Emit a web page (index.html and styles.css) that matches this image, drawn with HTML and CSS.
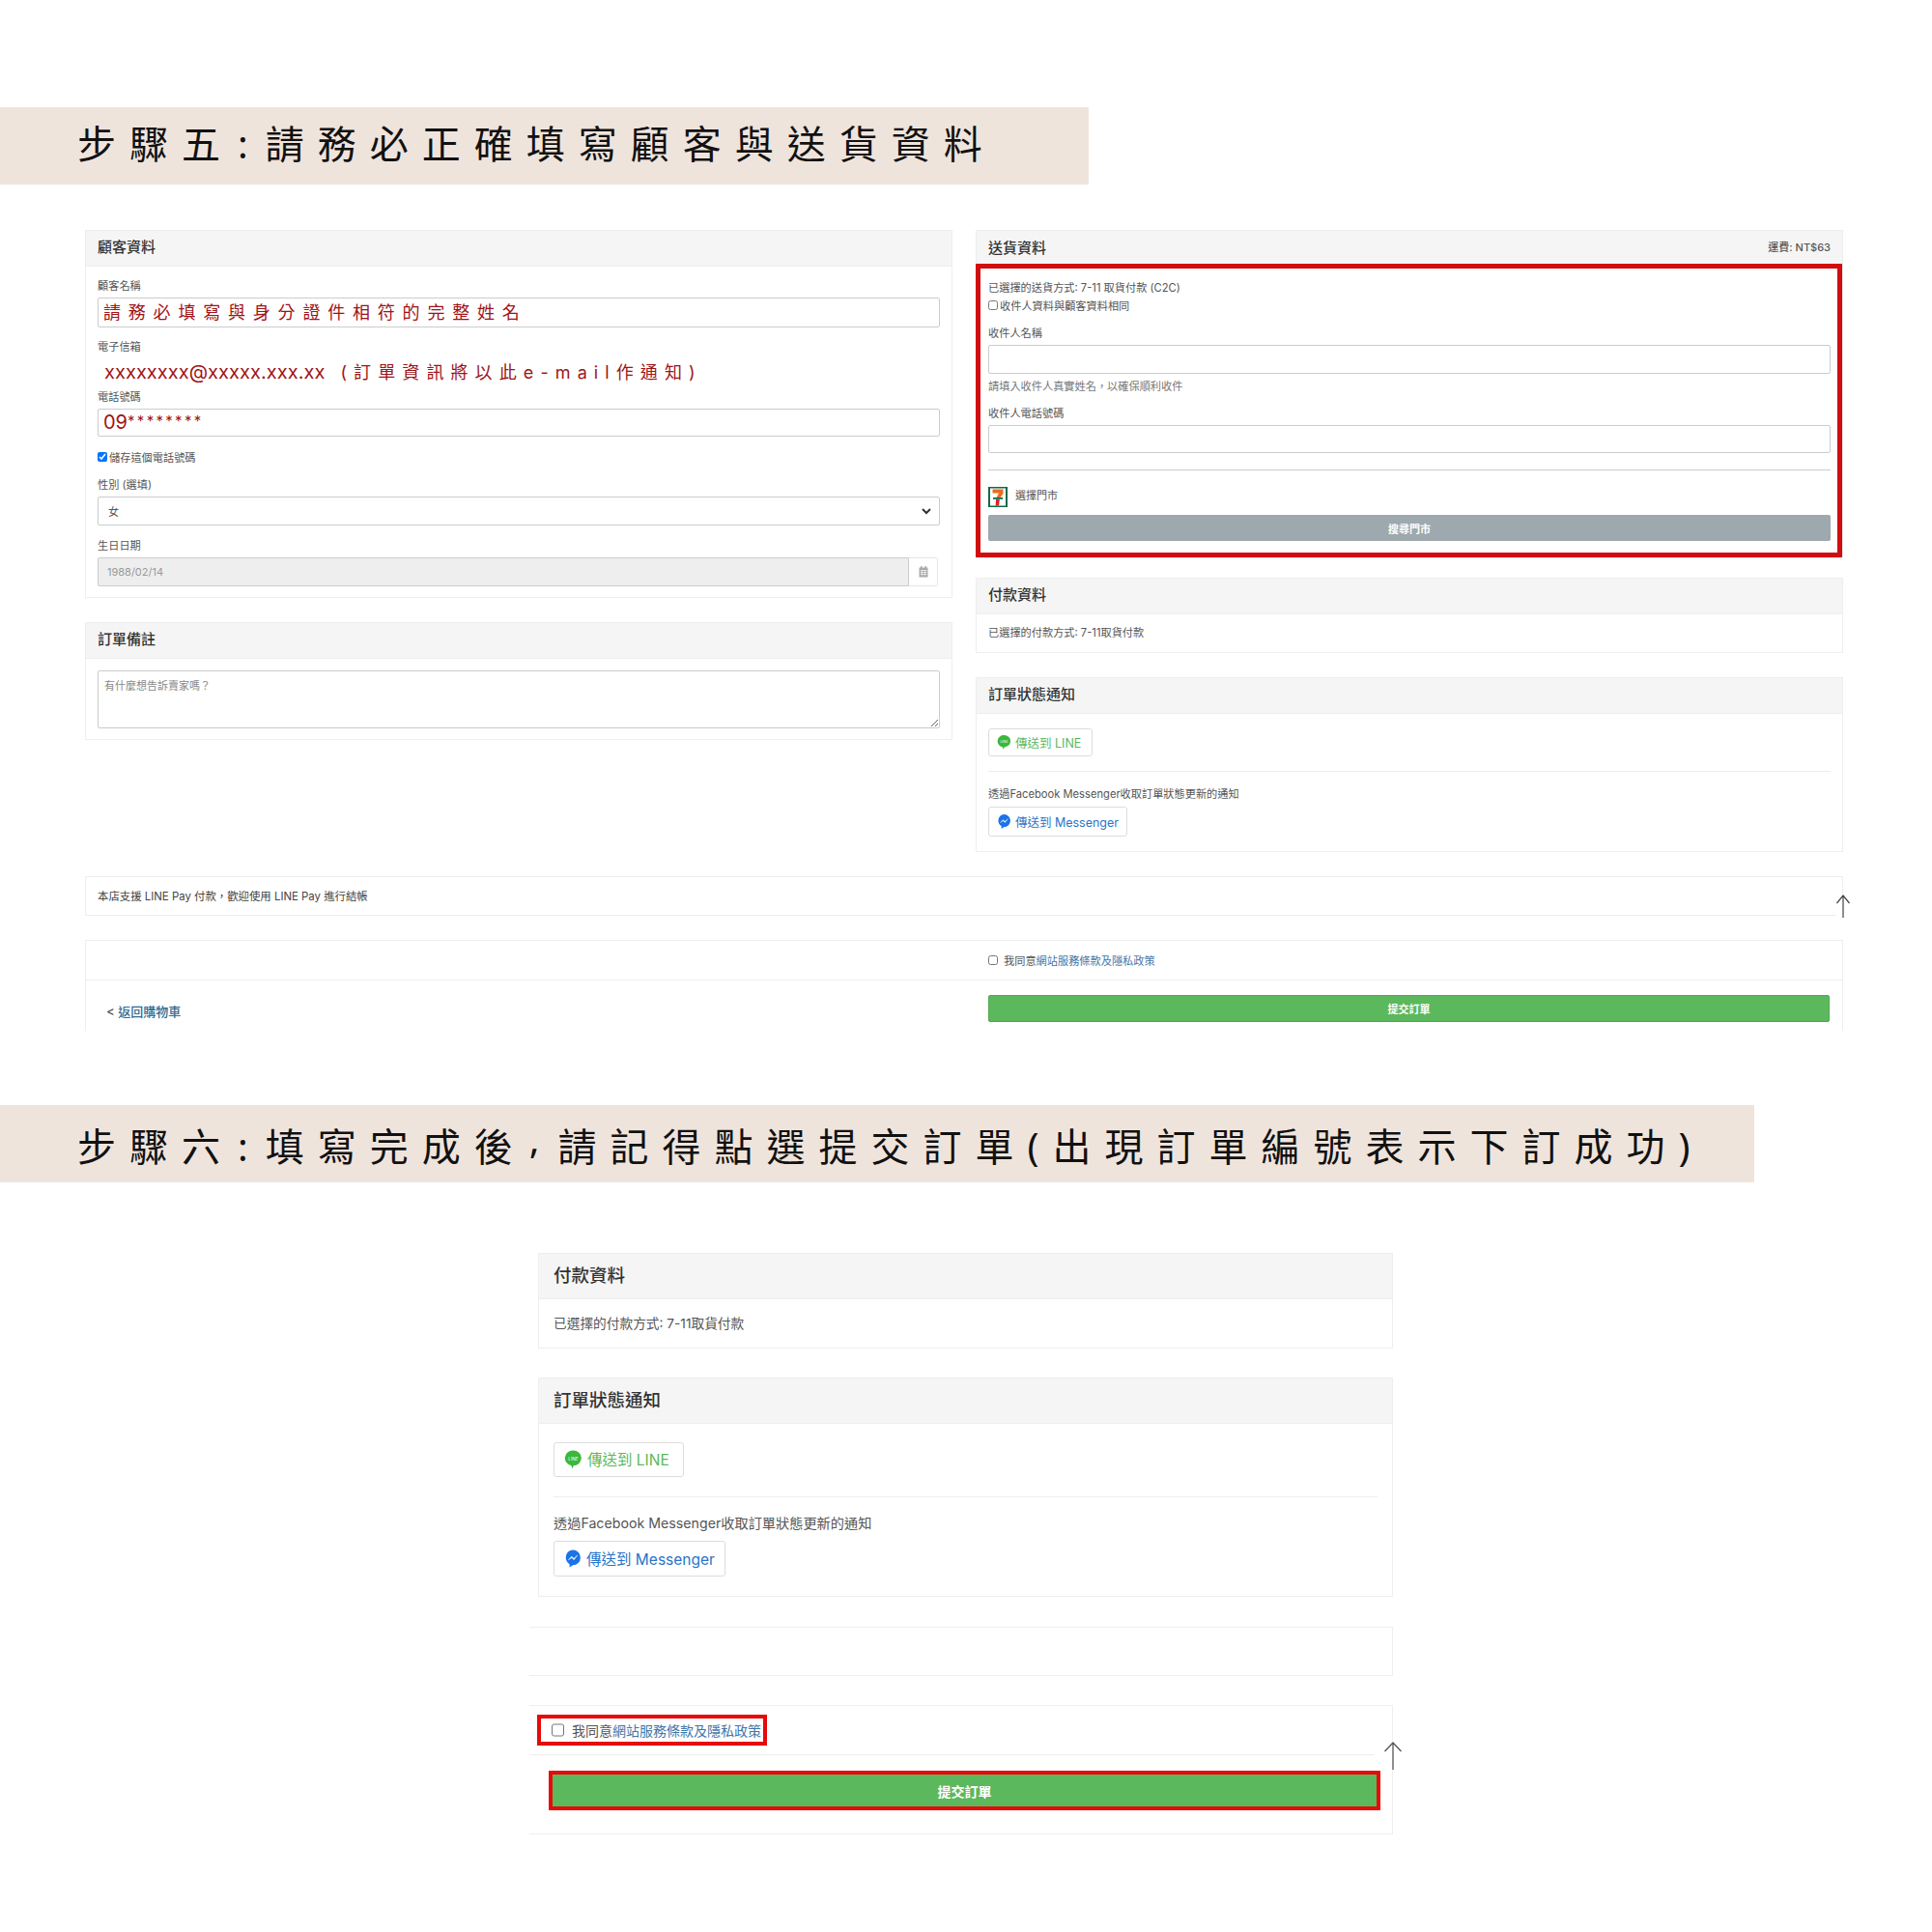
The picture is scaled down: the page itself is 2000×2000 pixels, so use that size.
FILE: index.html
```html
<!DOCTYPE html>
<html lang="zh-Hant">
<head>
<meta charset="utf-8">
<title>步驟五與步驟六</title>
<link rel="stylesheet" href="styles.css">
</head>
<body>
<h1 class="banner banner-five">步驟五<span class="colon">:</span>請務必正確填寫顧客與送貨資料</h1>

<main class="checkout">
  <div class="cols">
    <div class="col">
      <section class="panel">
        <h2 class="panel-head">顧客資料</h2>
        <div class="panel-body customer-body">
          <div class="label">顧客名稱</div>
          <div class="input h31 red-name">請務必填寫與身分證件相符的完整姓名</div>
          <div class="label gap12">電子信箱</div>
          <div class="email-line"><span class="email">xxxxxxxx@xxxxx.xxx.xx</span><span class="email-note">(訂單資訊將以此e-mail作通知)</span></div>
          <div class="label">電話號碼</div>
          <div class="input h29 red-phone">09<span class="stars">********</span></div>
          <label class="check-row gap13"><input class="tick" type="checkbox" checked>儲存這個電話號碼</label>
          <div class="label gap13">性別 (選填)</div>
          <div class="input h30 select-box"><span>女</span>
            <svg class="chev" viewBox="0 0 10 7" width="10" height="7"><path d="M1 1l4 4 4-4" fill="none" stroke="#333" stroke-width="2"/></svg>
          </div>
          <div class="label gap13">生日日期</div>
          <div class="date-row">
            <div class="date-input">1988/02/14</div>
            <div class="date-addon">
              <svg viewBox="0 0 10 12" width="10" height="12"><path d="M2 0h1.500v2H2zM6.500 0H8v2H6.500z" fill="#aaa"/><path d="M.5 1.500h9V11.500h-9z" fill="#aaa"/><path d="M1.500 4.500h7M1.500 6.500h7M1.500 8.500h7M3.500 4v6M6.500 4v6" stroke="#fff" stroke-width=".6"/></svg>
            </div>
          </div>
        </div>
      </section>

      <section class="panel gap25">
        <h2 class="panel-head">訂單備註</h2>
        <div class="panel-body notes-body">
          <textarea class="notes" placeholder="有什麼想告訴賣家嗎？"></textarea>
        </div>
      </section>
    </div>

    <div class="col">
      <section class="panel">
        <div class="panel-head ship-head"><h2 class="ship-title">送貨資料</h2><span class="fee">運費: NT$63</span></div>
        <div class="red-box">
          <div class="line">已選擇的送貨方式: 7-11 取貨付款 (C2C)</div>
          <label class="check-row same-row"><input class="tick" type="checkbox">收件人資料與顧客資料相同</label>
          <div class="label gap13">收件人名稱</div>
          <div class="input h30"></div>
          <div class="line help">請填入收件人真實姓名，以確保順利收件</div>
          <div class="label gap12">收件人電話號碼</div>
          <div class="input h29"></div>
          <hr class="rule ship-rule">
          <div class="store-row">
            <svg class="seven" viewBox="0 0 20 21" width="20" height="21">
              <rect width="20" height="21" fill="#0d6b4a"/>
              <rect x="2" y="1.500" width="16" height="18" fill="#fff"/>
              <path d="M4.500 2.500h11v4.500l-3 4H8.500l2.500-4.500H4.500z" fill="#ee6a1f"/>
              <path d="M5 11h10v1.800H5z" fill="#0d6b4a"/>
              <path d="M8 13h3.800l-.8 6.500H7.600z" fill="#d8242b"/>
            </svg>
            <span>選擇門市</span>
          </div>
          <div class="btn grey-btn">搜尋門市</div>
        </div>
      </section>

      <section class="panel gap20">
        <h2 class="panel-head">付款資料</h2>
        <div class="panel-body pay-body">已選擇的付款方式: 7-11取貨付款</div>
      </section>

      <section class="panel gap25">
        <h2 class="panel-head">訂單狀態通知</h2>
        <div class="panel-body notify-body">
          <div class="send line-btn">
            <svg viewBox="0 0 16 18" width="15" height="17"><path d="M8 1a7 6.600 0 0 1 0 13.200L7.500 17 6 14A7 6.600 0 0 1 8 1z" fill="#3ab83a"/><text x="8" y="9.500" font-size="4" text-anchor="middle" fill="#fff" font-family="Inter">LINE</text></svg>
            <span>傳送到 LINE</span>
          </div>
          <hr class="rule notify-rule">
          <div class="line">透過Facebook Messenger收取訂單狀態更新的通知</div>
          <div class="send msg-btn">
            <svg viewBox="0 0 16 18" width="15" height="17"><path d="M8 1a7 7 0 0 1 0 14l-3 2v-3A7 7 0 0 1 8 1z" fill="#1a73e8"/><path d="M4 10l3-3 2 2 3-3-3 4-2-2z" fill="#fff" stroke="#fff" stroke-width=".5"/></svg>
            <span>傳送到 Messenger</span>
          </div>
        </div>
      </section>
    </div>
  </div>

  <section class="panel gap25 pay-note has-arrow">本店支援 LINE Pay 付款，歡迎使用 LINE Pay 進行結帳
    <svg class="arrow arrow-five" viewBox="0 0 16 24" width="16" height="24"><rect width="16" height="24" fill="#fff"/><path d="M8 24V1M1.500 9L8 1l6.500 8" fill="none" stroke="#444" stroke-width="1.200"/></svg>
  </section>

  <section class="panel gap25 terms">
    <div class="terms-row">
      <label class="agree"><input class="tick" type="checkbox">我同意<a class="link" href="#">網站服務條款及隱私政策</a></label>
    </div>
    <div class="submit-row">
      <a class="back" href="#"><span class="lt">&lt;</span> 返回購物車</a>
      <div class="btn green-btn">提交訂單</div>
    </div>
  </section>
</main>

<h1 class="banner banner-six">步驟六<span class="colon">:</span>填寫完成後<span class="comma">,</span>請記得點選提交訂單<span class="paren">(</span>出現訂單編號表示下訂成功<span class="paren">)</span></h1>

<main class="review">
  <section class="panel big">
    <h2 class="panel-head">付款資料</h2>
    <div class="panel-body pay-body">已選擇的付款方式: 7-11取貨付款</div>
  </section>

  <section class="panel big gap30">
    <h2 class="panel-head">訂單狀態通知</h2>
    <div class="panel-body notify-body">
      <div class="send line-btn">
        <svg viewBox="0 0 16 18" width="19" height="22"><path d="M8 1a7 6.600 0 0 1 0 13.200L7.500 17 6 14A7 6.600 0 0 1 8 1z" fill="#3ab83a"/><text x="8" y="9.500" font-size="4" text-anchor="middle" fill="#fff" font-family="Inter">LINE</text></svg>
        <span>傳送到 LINE</span>
      </div>
      <hr class="rule notify-rule">
      <div class="line">透過Facebook Messenger收取訂單狀態更新的通知</div>
      <div class="send msg-btn">
        <svg viewBox="0 0 16 18" width="18" height="21"><path d="M8 1a7 7 0 0 1 0 14l-3 2v-3A7 7 0 0 1 8 1z" fill="#1a73e8"/><path d="M4 10l3-3 2 2 3-3-3 4-2-2z" fill="#fff" stroke="#fff" stroke-width=".5"/></svg>
        <span>傳送到 Messenger</span>
      </div>
    </div>
  </section>

  <section class="panel open-left blank gap31"></section>

  <section class="panel open-left final gap30 has-arrow">
    <div class="final-top">
      <label class="agree mark"><input class="tick" type="checkbox">我同意<a class="link" href="#">網站服務條款及隱私政策</a></label>
    </div>
    <div class="final-bottom">
      <div class="btn green-btn big-green">提交訂單</div>
    </div>
    <svg class="arrow arrow-six" viewBox="0 0 20 30" width="20" height="30"><rect width="20" height="30" fill="#fff"/><path d="M10 30V2M1.500 11L10 2l8.500 9" fill="none" stroke="#555" stroke-width="1.300"/></svg>
  </section>
</main>
</body>
</html>
```

FILE: styles.css
```css
* { box-sizing: border-box; }
html, body { margin: 0; padding: 0; background: #fff; }
body {
  width: 2000px;
  height: 2000px;
  overflow: hidden;
  font-family: Inter, "Noto Sans CJK TC", sans-serif;
  color: #555;
  font-size: 11px;
  padding-top: 111px;
}

.banner {
  height: 80px;
  margin: 0;
  padding-left: 80px;
  background: #efe4dc;
  color: #111;
  font-family: "Noto Sans CJK TC", sans-serif;
  font-size: 40px;
  font-weight: 400;
  line-height: 73px;
  letter-spacing: 14px;
  white-space: nowrap;
}
.banner-five { width: 1127px; }
.banner-six { width: 1816px; margin-top: 77px; line-height: 83px; }
.colon, .comma, .paren { font-family: "Noto Sans", sans-serif; }
.colon { margin: 0 4px; }
.comma { position: relative; top: -8px; margin: 0 5px 0 3px; }

.checkout { width: 1820px; margin: 47px 0 0 88px; }
.cols { display: grid; grid-template-columns: 898px 898px; column-gap: 24px; }
.col { min-width: 0; }
.gap12 { margin-top: 12px; }
.gap13 { margin-top: 13px; }
.gap20 { margin-top: 20px; }
.gap25 { margin-top: 25px; }
.gap30 { margin-top: 30px; }
.gap31 { margin-top: 31px; }

.panel { border: 1px solid #eee; background: #fff; position: relative; }
.panel-head {
  height: 37px;
  margin: 0;
  padding-left: 12px;
  background: #f5f5f5;
  border-bottom: 1px solid #eee;
  color: #333;
  font-size: 15px;
  font-weight: 500;
  line-height: 33px;
}
.panel-body { padding: 0 12px; }

.label { height: 16px; line-height: 16px; margin-bottom: 4px; color: #555; font-size: 11.200px; }
.input {
  border: 1px solid #ccc;
  border-radius: 2px;
  background: #fff;
  padding: 0 6px;
  white-space: nowrap;
}
.h31 { height: 31px; }
.h30 { height: 30px; }
.h29 { height: 29px; }

.customer-body { padding-top: 12px; padding-bottom: 11px; }
.red-name {
  color: #a01418;
  font-size: 18px;
  letter-spacing: 7.800px;
  line-height: 29px;
  padding-left: 5px;
}
.email-line {
  height: 32px;
  padding-left: 7px;
  color: #a01418;
  white-space: nowrap;
  line-height: 28px;
}
.email { font-size: 20px; letter-spacing: .05px; }
.email-note { font-size: 18px; letter-spacing: 7.100px; margin-left: 16px; }
.red-phone { color: #a01418; font-size: 20px; line-height: 27px; padding-left: 5px; }
.stars { font-size: 15px; letter-spacing: 2.300px; position: relative; top: -3px; }

.check-row { display: flex; align-items: center; height: 16px; font-size: 11.200px; color: #555; }
.tick { width: 10px; height: 10px; margin: 0 2px 0 0; flex: none; }
.select-box {
  display: flex;
  align-items: center;
  justify-content: space-between;
  padding: 0 8px 0 10px;
  color: #555;
  font-size: 11px;
}
.date-row { display: flex; height: 30px; width: 870px; }
.date-input {
  width: 840px;
  border: 1px solid #ccc;
  border-radius: 2px 0 0 2px;
  background: #eee;
  color: #999;
  font-size: 11px;
  line-height: 28px;
  padding-left: 9px;
}
.date-addon {
  flex: 1;
  border: 1px solid #e6e6e6;
  border-left: 0;
  border-radius: 0 2px 2px 0;
  display: flex;
  align-items: center;
  justify-content: center;
}

.notes-body { padding-top: 12px; padding-bottom: 11px; }
.notes {
  display: block;
  width: 100%;
  height: 60px;
  border: 1px solid #ccc;
  border-radius: 2px;
  padding: 6px;
  font-family: inherit;
  font-size: 11px;
}
.notes::placeholder { color: #888; }

.ship-head { display: flex; justify-content: space-between; align-items: center; height: 34px; padding-right: 12px; border-bottom: 0; }
.ship-title { margin: 0; font-size: 15px; font-weight: 500; }
.fee { font-size: 11px; color: #555; }
.red-box {
  margin: 0 0 0 -1px;
  width: 897px;
  height: 304px;
  border: 5px solid #d10d10;
  padding: 12px 7px 0 8px;
}
.line { height: 16px; line-height: 16px; font-size: 11.200px; white-space: nowrap; }
.same-row { margin-top: 2px; }
.help { margin-top: 5px; color: #777; }
.rule { margin: 0; border: 0; border-top: 1px solid #ddd; }
.ship-rule { margin-top: 17px; border-color: #ccc; }
.store-row { display: flex; align-items: flex-start; gap: 8px; height: 21px; margin-top: 17px; font-size: 11px; line-height: 18px; }
.seven { flex: none; }
.btn {
  display: flex;
  align-items: center;
  justify-content: center;
  color: #fff;
  font-weight: 700;
  font-size: 11px;
  border-radius: 2px;
}
.grey-btn { height: 27px; margin-top: 8px; background: #9da9ae; }

.pay-body { height: 39px; line-height: 39px; color: #555; font-size: 11.200px; }
.notify-body { padding-top: 15px; padding-bottom: 15px; }
.send {
  display: inline-flex;
  align-items: center;
  gap: 4px;
  padding: 0 8px;
  border: 1px solid #ddd;
  border-radius: 3px;
  font-size: 12.500px;
  vertical-align: top;
  white-space: nowrap;
}
.send span { padding-bottom: 1px; }
.line-btn { height: 29px; width: 108px; color: #5cb85c; }
.msg-btn { height: 31px; width: 144px; margin-top: 5px; color: #2a74c9; }
.notify-rule { margin: 15px 0 15px; border-color: #eee; }

.pay-note { height: 41px; padding-left: 12px; line-height: 41px; font-size: 11.400px; color: #444; }
.arrow { position: absolute; display: block; }
.arrow-five { right: -9px; bottom: -3px; }

.terms { height: 94px; border-bottom: 0; }
.terms-row { height: 41px; padding-left: 934px; border-bottom: 1px solid #eee; display: flex; align-items: center; }
.agree { display: flex; align-items: center; font-size: 11.200px; color: #555; white-space: nowrap; }
.agree .tick { margin-right: 6px; }
.link { color: #3f75a8; text-decoration: none; }
.submit-row { display: grid; grid-template-columns: 934px 871px; }
.back { padding: 23px 0 0 21px; color: #2f6c92; text-decoration: none; font-weight: 500; font-size: 13px; line-height: 18px; }
.lt { color: #555; }
.green-btn { height: 28px; margin-top: 15px; background: #5cb85c; border: 1px solid #53a653; }

.review { width: 894px; margin: 73px 0 0 548px; }
.big { margin-left: 9px; }
.big .panel-head { height: 47px; padding-left: 15px; font-size: 18.500px; line-height: 44px; }
.big .panel-body { padding-left: 15px; padding-right: 15px; }
.big .pay-body { height: 50px; line-height: 50px; font-size: 13.700px; }
.big .notify-body { padding-top: 19px; padding-bottom: 20px; }
.big .line { font-size: 14.200px; height: 19px; line-height: 19px; }
.big .send { font-size: 15.500px; gap: 5px; padding: 0 10px; }
.big .send span { padding-bottom: 2px; }
.big .line-btn { height: 36px; width: 135px; }
.big .msg-btn { height: 37px; width: 178px; margin-top: 9px; }
.big .notify-rule { margin: 20px 0 17px; }

.open-left { border-left: 0; }
.blank { height: 51px; }
.final { height: 134px; }
.final-top { height: 51px; width: 874px; padding: 9px 0 0 8px; border-bottom: 1px solid #eee; }
.mark {
  width: 238px;
  height: 32px;
  border: 4px solid #e60a0a;
  padding-left: 11px;
  font-size: 14px;
}
.mark .tick { width: 13px; height: 14px; margin-right: 8px; }
.final-bottom { padding: 16px 0 0 20px; }
.big-green {
  width: 861px;
  height: 41px;
  margin: 0;
  border: 4px solid #e60a0a;
  border-radius: 0;
  font-size: 14px;
}
.arrow-six { right: -11px; top: 36px; }
```
